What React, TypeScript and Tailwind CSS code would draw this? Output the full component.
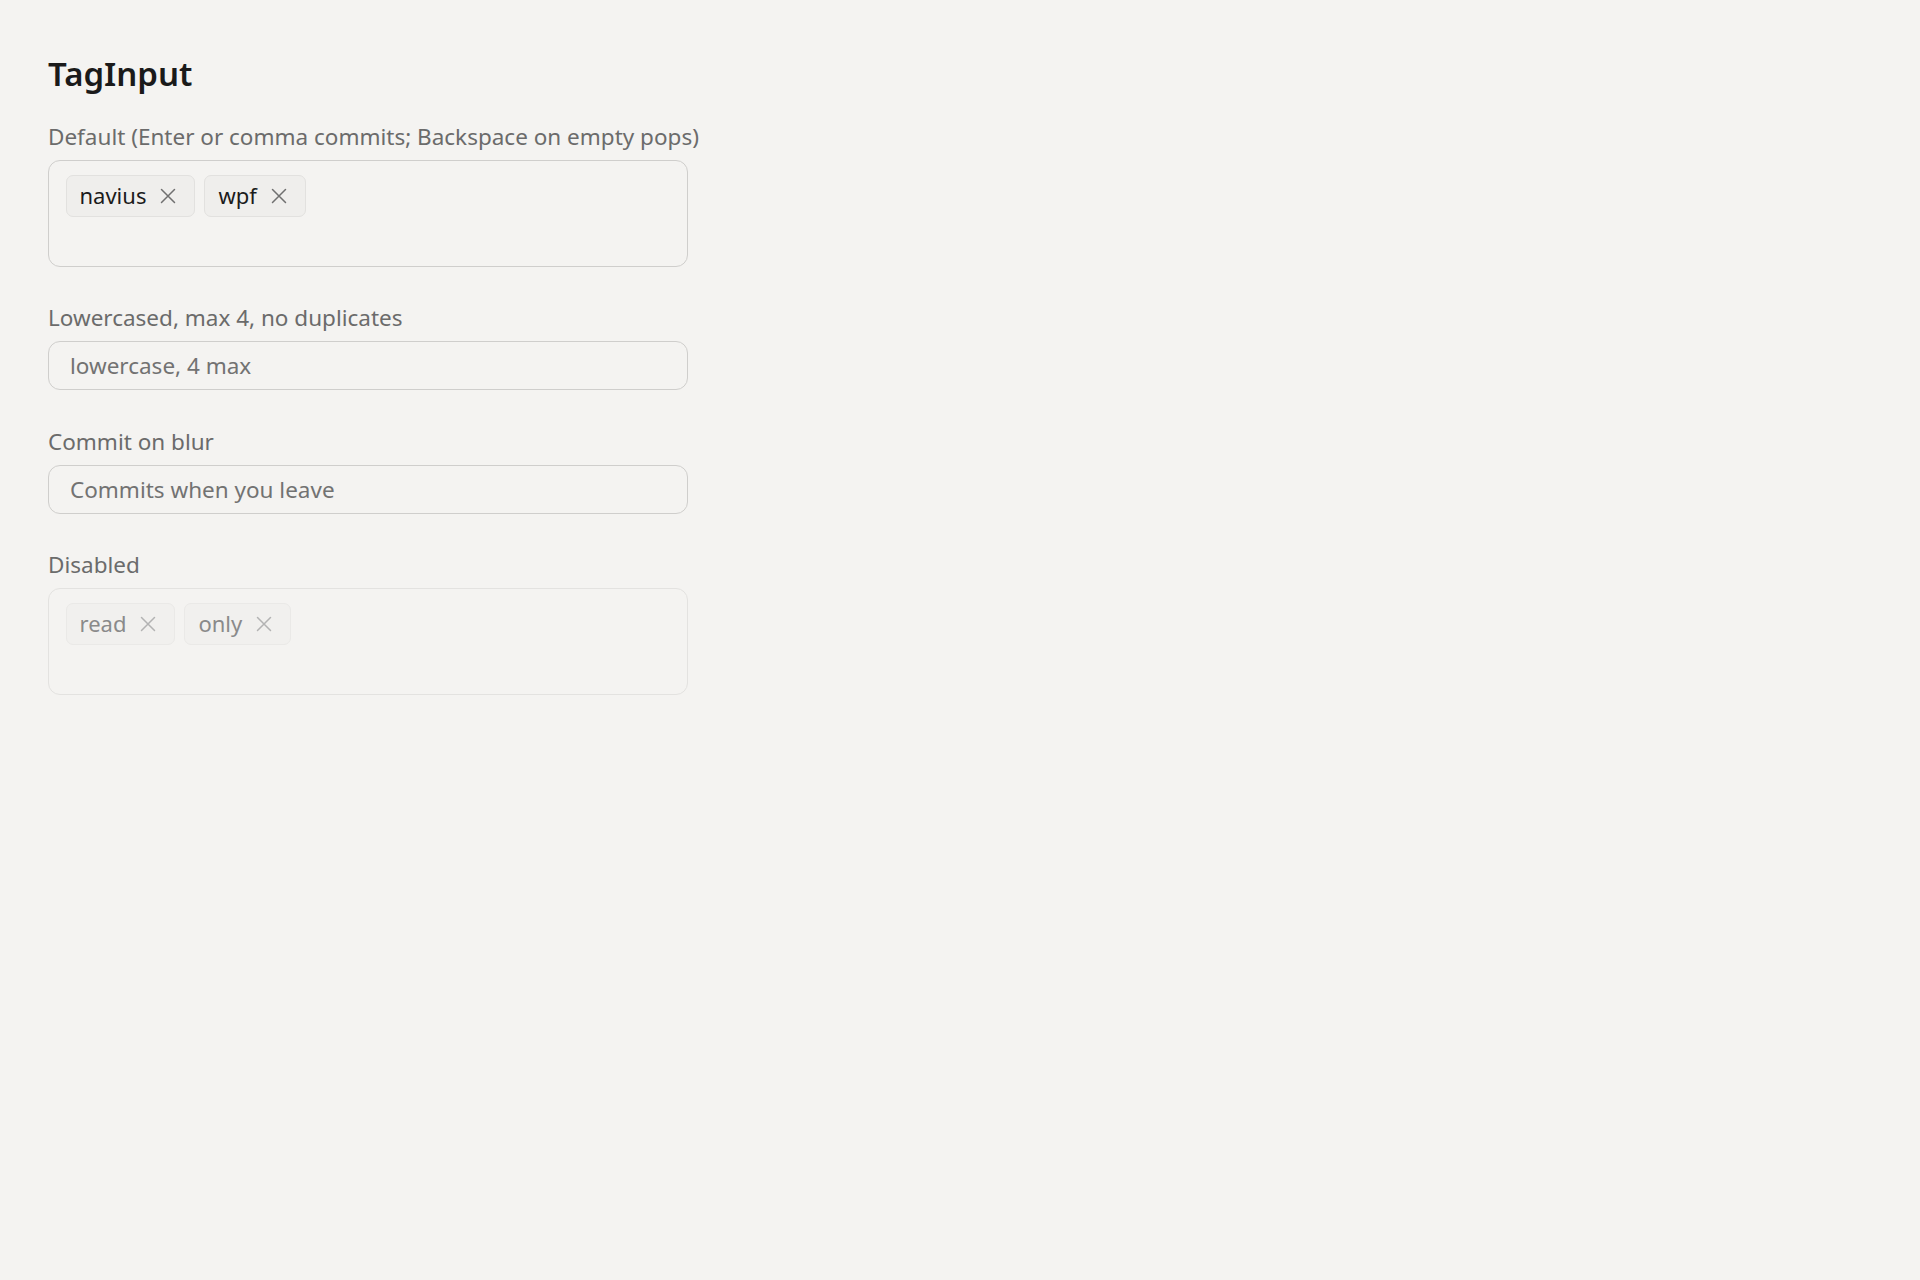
import { useState, KeyboardEvent } from "react";

type TagInputProps = {
  label: string;
  initial?: string[];
  placeholder?: string;
  lowercase?: boolean;
  max?: number;
  unique?: boolean;
  commitOnBlur?: boolean;
  disabled?: boolean;
};

function CloseIcon({ className }: { className?: string }) {
  return (
    <svg viewBox="0 0 18 18" className={className} fill="none">
      <path
        d="M2.5 2.5L15.5 15.5M15.5 2.5L2.5 15.5"
        stroke="currentColor"
        strokeWidth="1.5"
        strokeLinecap="round"
      />
    </svg>
  );
}

function TagInput({
  label,
  initial = [],
  placeholder,
  lowercase,
  max,
  unique,
  commitOnBlur,
  disabled,
}: TagInputProps) {
  const [tags, setTags] = useState<string[]>(initial);
  const [text, setText] = useState("");

  const commit = () => {
    let value = text.trim();
    if (!value) return;
    if (lowercase) value = value.toLowerCase();
    if (max && tags.length >= max) return;
    if (unique && tags.includes(value)) return;
    setTags([...tags, value]);
    setText("");
  };

  const onKeyDown = (e: KeyboardEvent<HTMLInputElement>) => {
    if (e.key === "Enter" || e.key === ",") {
      e.preventDefault();
      commit();
    } else if (e.key === "Backspace" && text === "" && tags.length > 0) {
      setTags(tags.slice(0, -1));
    }
  };

  const hasTags = tags.length > 0;

  return (
    <div className="flex flex-col">
      <label className="mb-2 text-[22.5px] leading-[30px] text-[#6b6b6b]">
        {label}
      </label>
      <div
        className={
          disabled
            ? "w-[640px] rounded-[12px] border-[1.5px] border-[#e3e2e0] bg-[#f4f3f1]"
            : "w-[640px] rounded-[12px] border-[1.5px] border-[#cfcecc] bg-[#f4f3f1]"
        }
      >
        {hasTags ? (
          <div className="flex flex-wrap items-start gap-x-[9px] gap-y-2 px-[16.5px] pt-[13.5px] pb-0">
            {tags.map((tag, i) => (
              <span
                key={tag + i}
                className={
                  disabled
                    ? "flex h-[42px] items-center rounded-[7px] border border-[#eae9e7] bg-[#f1f0ee] pl-[13px] pr-[17px] text-[22px] text-[#8a8a8a]"
                    : "flex h-[42px] items-center rounded-[7px] border border-[#e2e1df] bg-[#efeeec] pl-[13px] pr-[17px] text-[22px] text-[#1b1b1b]"
                }
              >
                {tag}
                <button
                  type="button"
                  disabled={disabled}
                  onClick={() => setTags(tags.filter((_, j) => j !== i))}
                  className={
                    disabled
                      ? "ml-[13px] flex items-center text-[#b3b3b3]"
                      : "ml-[13px] flex items-center text-[#707070]"
                  }
                >
                  <CloseIcon className="h-[18px] w-[18px]" />
                </button>
              </span>
            ))}
            <input
              value={text}
              disabled={disabled}
              onChange={(e) => setText(e.target.value)}
              onKeyDown={onKeyDown}
              onBlur={commitOnBlur ? commit : undefined}
              className="h-[41px] w-full bg-transparent px-1 text-[22px] text-[#1b1b1b] outline-none"
            />
          </div>
        ) : (
          <input
            value={text}
            placeholder={placeholder}
            onChange={(e) => setText(e.target.value)}
            onKeyDown={onKeyDown}
            onBlur={commitOnBlur ? commit : undefined}
            className="h-[47px] w-full bg-transparent px-[21px] text-[22.5px] text-[#1b1b1b] outline-none placeholder:text-[#727272]"
          />
        )}
      </div>
    </div>
  );
}

export default function App() {
  return (
    <div
      className="min-h-screen bg-[#f4f3f1] px-12 pt-[52px]"
      style={{ fontFamily: '"Noto Sans", "Open Sans", sans-serif' }}
    >
      <h1 className="mb-[26px] text-[33px] font-semibold leading-[44px] text-[#1a1a1a]">
        TagInput
      </h1>
      <div className="flex flex-col gap-[36.5px]">
        <TagInput
          label="Default (Enter or comma commits; Backspace on empty pops)"
          initial={["navius", "wpf"]}
        />
        <TagInput
          label="Lowercased, max 4, no duplicates"
          placeholder="lowercase, 4 max"
          lowercase
          max={4}
          unique
        />
        <TagInput
          label="Commit on blur"
          placeholder="Commits when you leave"
          commitOnBlur
        />
        <TagInput label="Disabled" initial={["read", "only"]} disabled />
      </div>
    </div>
  );
}
